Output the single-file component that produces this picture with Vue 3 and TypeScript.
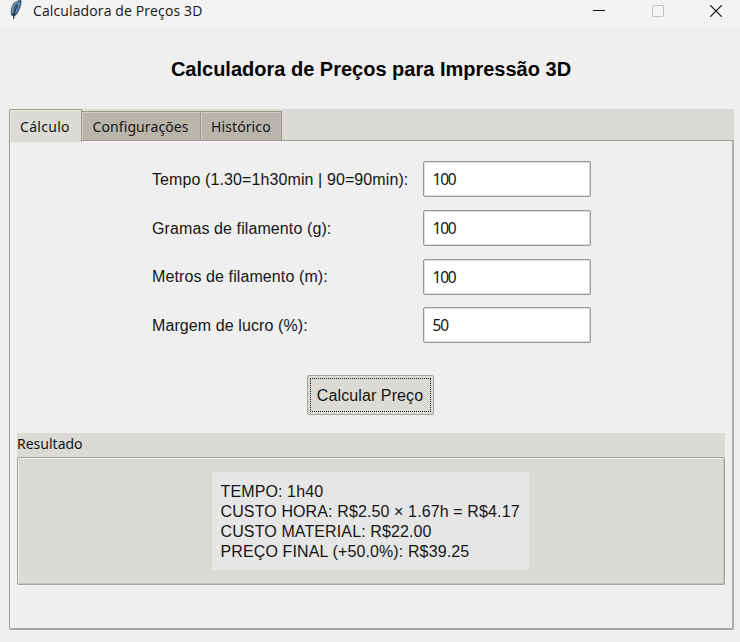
<script setup lang="ts">
import { ref } from 'vue'

interface Field {
  label: string
  value: string
}

const tabs = [
  { name: 'Cálculo', cls: 'calc' },
  { name: 'Configurações', cls: 'config' },
  { name: 'Histórico', cls: 'hist' },
]
const active = ref('Cálculo')

const fields = ref<Field[]>([
  { label: 'Tempo (1.30=1h30min | 90=90min):', value: '100' },
  { label: 'Gramas de filamento (g):', value: '100' },
  { label: 'Metros de filamento (m):', value: '100' },
  { label: 'Margem de lucro (%):', value: '50' },
])

const result = [
  'TEMPO: 1h40',
  'CUSTO HORA: R$2.50 × 1.67h = R$4.17',
  'CUSTO MATERIAL: R$22.00',
  'PREÇO FINAL (+50.0%): R$39.25',
]
</script>

<template>
  <div class="window">
    <header class="titlebar">
      <svg class="feather" width="14" height="20" viewBox="0 0 14 20">
        <path d="M12.2 0 C13 2.5 12 6.5 10.2 10 C8.9 13 7.4 15.4 5 16.6 L2.4 15.6 C.9 11.2 2.4 5.7 5.4 2.5 C6.9 .9 9 0 12.2 0Z" fill="#34495d" />
        <path d="M11.3 .8 C12 3.2 10.4 7 8.7 10.4 C7.4 12.8 6.4 14.4 4.8 15 C4.2 10.3 6.6 5 11.3 .8Z" fill="#5795cf" />
        <path d="M8.8 1.2 C4.8 4.4 3 8.6 3.3 13.4" fill="none" stroke="#86a9c6" stroke-width="1.4" />
        <path d="M8.6 5 C6.3 9 5.2 13 4.6 19" fill="none" stroke="#22282e" stroke-width="1.1" />
      </svg>
      <span class="caption">Calculadora de Preços 3D</span>
      <div class="controls">
        <svg width="12" height="12" viewBox="0 0 12 12"><path d="M0 5.5H12" stroke="#111" /></svg>
        <svg width="12" height="12" viewBox="0 0 12 12"><rect x=".5" y=".5" width="11" height="11" rx="1" fill="none" stroke="#c3c3c3" /></svg>
        <svg width="12" height="12" viewBox="0 0 12 12"><path d="M.2 .2L11.8 11.8M11.8 .2L.2 11.8" stroke="#111" stroke-width="1.2" /></svg>
      </div>
    </header>

    <h1>Calculadora de Preços para Impressão 3D</h1>

    <main class="notebook">
      <nav class="tabs">
        <button
          v-for="t in tabs"
          :key="t.name"
          :class="['tab', t.cls, { active: active === t.name }]"
          @click="active = t.name"
        >
          {{ t.name }}
        </button>
      </nav>

      <section class="pane">
        <div class="form">
          <label v-for="f in fields" :key="f.label" class="row">
            <span class="label">{{ f.label }}</span>
            <input v-model="f.value" type="text" />
          </label>
        </div>

        <button class="calculate"><span>Calcular Preço</span></button>

        <div class="result">
          <div class="legend">Resultado</div>
          <div class="frame">
            <div class="output">
              <div v-for="line in result" :key="line">{{ line }}</div>
            </div>
          </div>
        </div>
      </section>
    </main>
  </div>
</template>

<style>
body {
  margin: 0;
  background: #efefef;
}
</style>

<style scoped>
* {
  box-sizing: border-box;
}
.window {
  width: 740px;
  height: 642px;
  overflow: hidden;
  display: flex;
  flex-direction: column;
  background: #efefef;
  color: #151515;
  font: 16px 'Liberation Sans', Arial, sans-serif;
}
button {
  margin: 0;
  padding: 0;
  color: inherit;
}
.titlebar {
  flex: none;
  height: 29px;
  display: flex;
  align-items: flex-start;
  padding-left: 9px;
  background: #f3f3f3;
}
.feather {
  flex: none;
}
.caption {
  margin-left: 10px;
  font: 14px/22px 'Open Sans', 'Noto Sans', sans-serif;
  letter-spacing: 0.12px;
  white-space: nowrap;
}
.controls {
  margin-left: auto;
  display: flex;
  gap: 46.5px;
  padding: 5px 18px 0 0;
}
h1 {
  flex: none;
  height: 80px;
  margin: 0;
  padding-left: 2px;
  text-align: center;
  font-size: 20px;
  font-weight: bold;
  line-height: 80px;
  color: #050505;
  white-space: nowrap;
}
.notebook {
  flex: none;
  width: 725px;
  height: 521px;
  margin-left: 9px;
  display: flex;
  flex-direction: column;
}
.tabs {
  flex: none;
  height: 32px;
  display: flex;
  align-items: flex-end;
  background: #dbdad4;
}
.tab {
  height: 30px;
  border: 1px solid #9c998f;
  border-left-width: 0;
  border-bottom: 0;
  background: #bab5ab;
  box-shadow: inset 1px 1px #cfccc4;
  font: 14px/30px 'Noto Sans', 'Open Sans', sans-serif;
  letter-spacing: 0.1px;
  text-align: left;
  white-space: nowrap;
}
.tab.calc {
  width: 73px;
  padding-left: 10px;
  letter-spacing: 0.3px;
}
.tab.config {
  width: 119px;
  padding-left: 10.5px;
}
.tab.hist {
  width: 81px;
  padding-left: 10px;
}
.tab.active {
  position: relative;
  height: 33px;
  margin-bottom: -1px;
  border-left-width: 1px;
  border-radius: 2px 0 0 0;
  background: #dcdbd6;
  box-shadow: inset 1px 1px #ebebe6;
  line-height: 34px;
}
.pane {
  flex: 1;
  display: flex;
  flex-direction: column;
  align-items: center;
  border: 1px solid #9d9b94;
  border-width: 1px 2px 2px 1px;
  border-color: #9d9b94 #b0aea8 #a8a69f #9d9b94;
  border-radius: 0 0 2px 2px;
  margin-top: -1px;
  padding: 20px 7px 0;
  box-shadow: inset 1px 1px #f5f5f3;
}
.form {
  width: 439px;
  display: flex;
  flex-direction: column;
  gap: 12.7px;
  padding-top: 0.4px;
}
.row {
  display: flex;
  align-items: center;
  justify-content: space-between;
}
.label {
  padding: 1px 0 0 0.5px;
  letter-spacing: 0.1px;
  white-space: nowrap;
}
input {
  width: 168px;
  height: 36px;
  border: 1px solid #9b9994;
  border-radius: 2px;
  background: #fff;
  box-shadow: inset 0 0 0 1px #deddd9;
  padding: 0 8px 0 9px;
  outline: none;
  color: #151515;
  font: 15.5px 'Noto Sans', 'Open Sans', sans-serif;
  letter-spacing: -1.2px;
}
.calculate {
  flex: none;
  width: 127px;
  height: 40px;
  margin: 31.6px 2px 0 0;
  padding: 2px;
  border: 1px solid #a4a29b;
  border-radius: 2px;
  background: #dcdbd6;
  font: 16px 'Liberation Sans', Arial, sans-serif;
  letter-spacing: 0.1px;
}
.calculate span {
  display: block;
  height: 34px;
  border: 1px dotted #111;
  line-height: 34px;
}
.result {
  flex: none;
  width: 708px;
  margin-top: 18px;
  background: #dbdad4;
}
.legend {
  height: 24px;
  font: 14px/21px 'Noto Sans', 'Open Sans', sans-serif;
}
.frame {
  height: 128px;
  border: 1px solid #a7a59e;
  border-radius: 2px;
  box-shadow: inset 1px 1px #eeeeea, inset -1px -1px #c4c3bd;
  display: flex;
  justify-content: center;
  padding: 14px 2px 0 0;
}
.output {
  width: 317px;
  height: 98px;
  padding: 10px 9px;
  background: #e6e6e6;
  line-height: 20px;
  letter-spacing: 0.12px;
  white-space: nowrap;
}
</style>
